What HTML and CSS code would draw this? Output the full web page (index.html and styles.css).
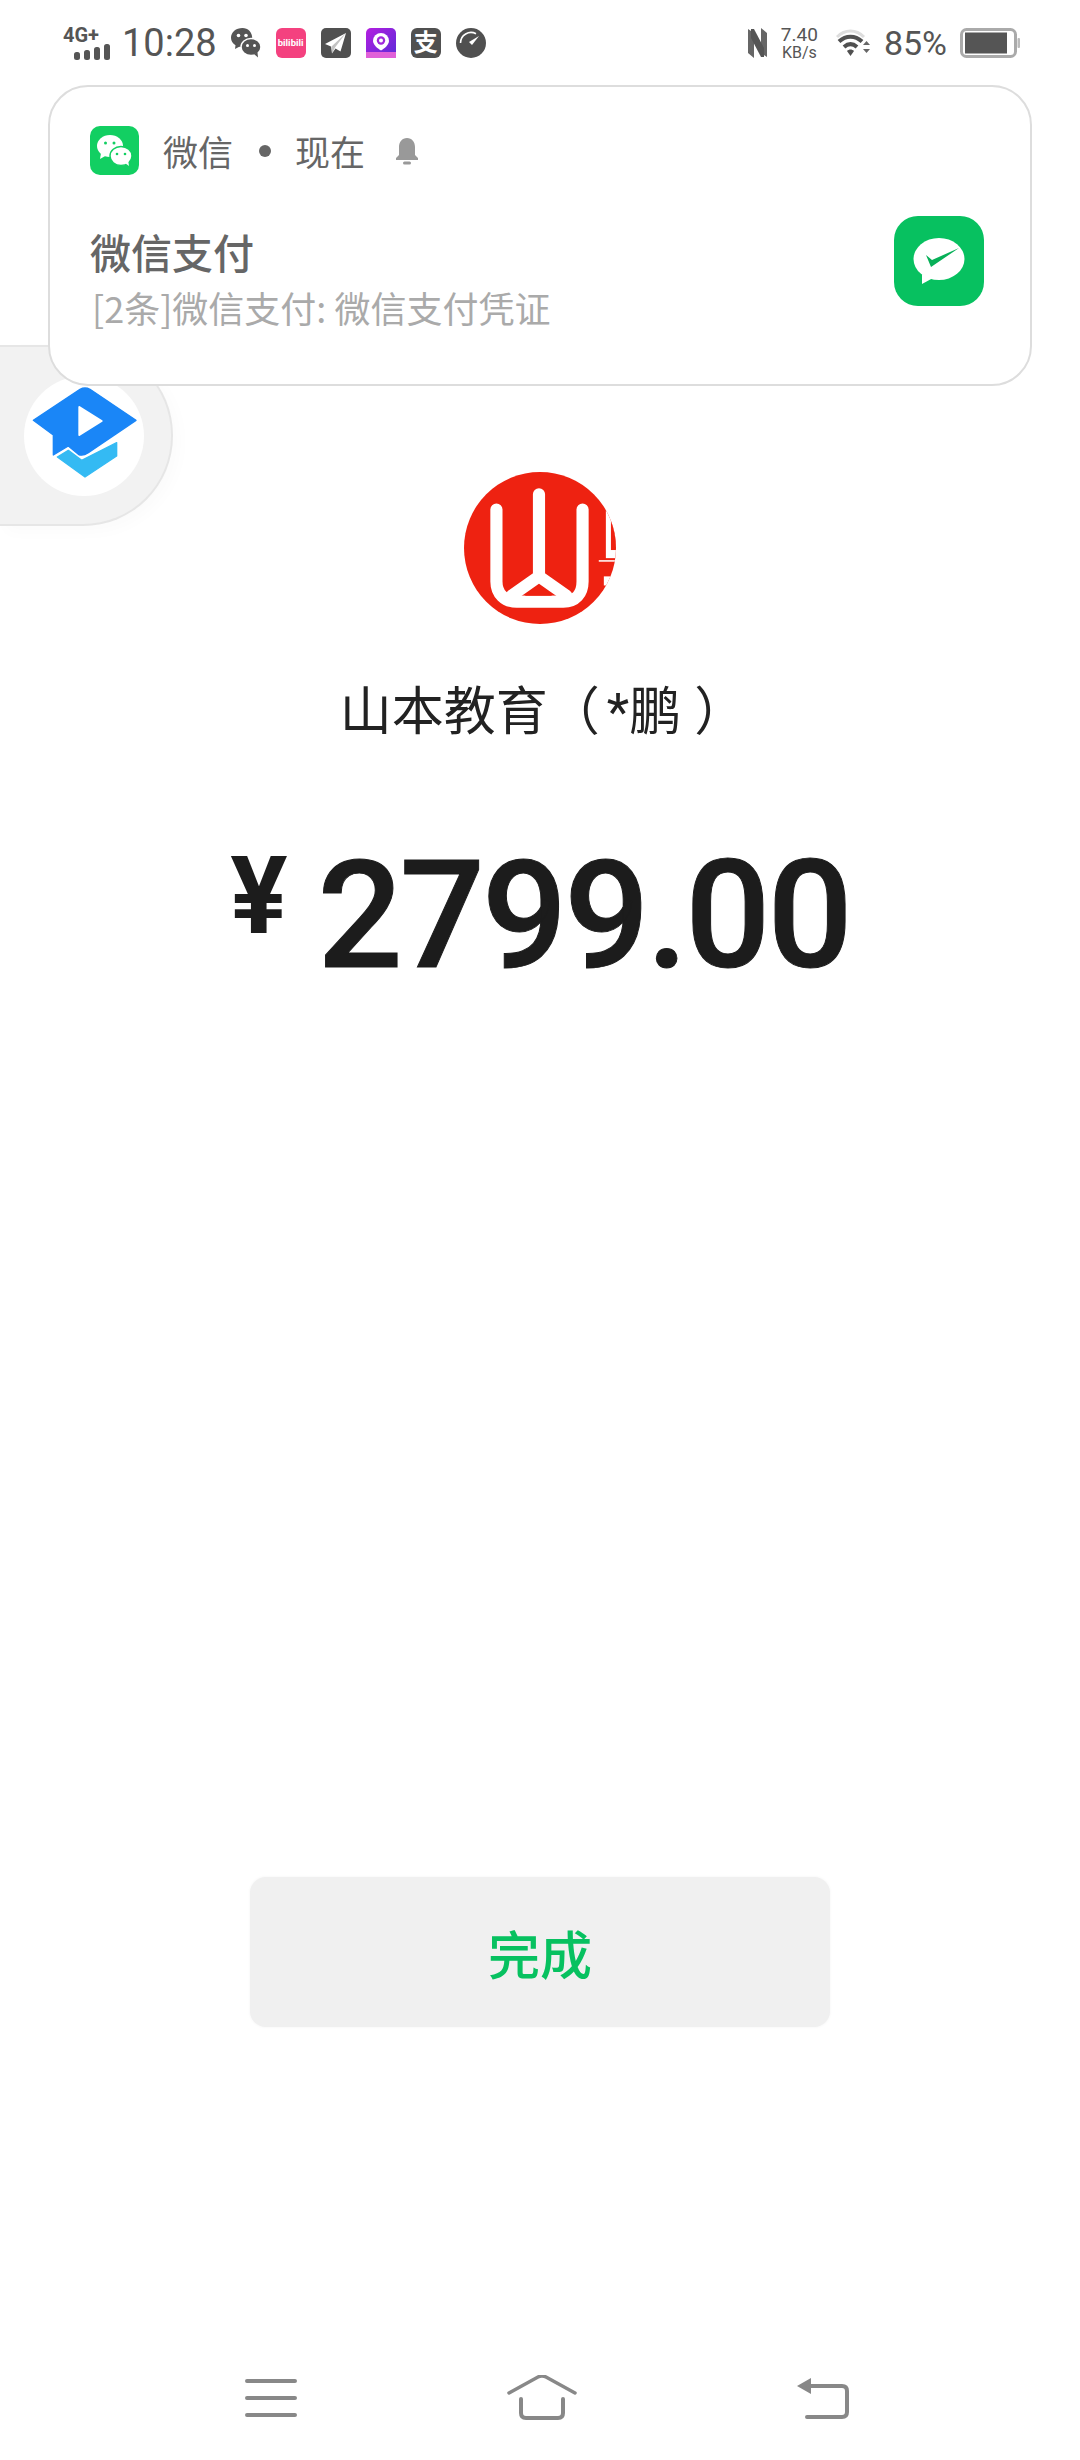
FILE: index.html
```html
<!DOCTYPE html>
<html lang="zh-CN">

<head>
  <meta charset="UTF-8">
  <meta name="viewport" content="width=device-width, initial-scale=1.0">
  <title>支付成功</title>
  <link rel="stylesheet" href="styles.css">
</head>

<body>
  <div class="page">
    <div class="status-bar">
      <div class="status-left">
        <div class="sig">
          <span class="sig-text">4G+</span>
          <svg width="36" height="16" viewBox="0 0 36 16">
            <rect x="0" y="8" width="6" height="8" rx="2.500" fill="#555" />
            <rect x="10" y="6" width="6" height="10" rx="2.500" fill="#555" />
            <rect x="20" y="3" width="6" height="13" rx="2.500" fill="#555" />
            <rect x="30" y="0" width="6" height="16" rx="2.500" fill="#555" />
          </svg>
        </div>
        <span class="time">10:28</span>
        <div class="app-icons">
          <svg width="30" height="30" viewBox="0 0 30 30">
            <path d="M11.500 0C5 0 0 4.200 0 9.800c0 3.200 1.700 5.800 4.500 7.500L4 21l4.200-2.300c1 .2 2 .3 3 .3 6 0 10-4 10-9.200C21.200 4.200 17 0 11.500 0z" fill="#555" />
            <ellipse cx="20" cy="19" rx="10" ry="8.500" fill="#555" stroke="#fff" stroke-width="1.500" />
            <path d="M23 26l4 3.500-.500-5z" fill="#555" />
            <circle cx="7.500" cy="7.500" r="1.800" fill="#fff" />
            <circle cx="15" cy="7.500" r="1.800" fill="#fff" />
            <circle cx="16.500" cy="17.500" r="1.500" fill="#fff" />
            <circle cx="23.500" cy="17.500" r="1.500" fill="#fff" />
          </svg>
          <div class="app-pink">bilibili</div>
          <svg width="30" height="30" viewBox="0 0 30 30">
            <rect width="30" height="30" rx="5" fill="#505050" />
            <path d="M25 5L4 16l6 2.500 1 7 3.500-5 5 3z" fill="#fff" />
            <path d="M25 5L10.500 18.500l.500 7 3-6z" fill="#505050" opacity=".35" />
          </svg>
          <svg width="30" height="30" viewBox="0 0 30 30">
            <defs>
              <linearGradient id="purple-fill" x1="0" y1="0" x2="1" y2="1">
                <stop offset="0" stop-color="#b41ee0" />
                <stop offset="1" stop-color="#5a2bd8" />
              </linearGradient>
            </defs>
            <rect width="30" height="30" rx="5" fill="url(#purple-fill)" />
            <rect y="24" width="30" height="6" fill="#e060d8" />
            <path d="M15 5a8 8 0 0 0-8 8c0 5 8 9.500 8 9.500s8-4.500 8-9.500a8 8 0 0 0-8-8z" fill="#fff" />
            <circle cx="15" cy="12.500" r="4.200" fill="#a028dc" />
            <circle cx="15" cy="12.500" r="2" fill="#fff" />
          </svg>
          <div class="app-zhi">支</div>
          <svg width="30" height="30" viewBox="0 0 30 30">
            <circle cx="15" cy="15" r="15" fill="#505050" />
            <path d="M4.500 15A10.500 10.500 0 0 1 20 5.800" fill="none" stroke="#fff" stroke-width="1.600" />
            <path d="M23 8L13 14l3 3z" fill="#fff" />
          </svg>
        </div>
      </div>
      <div class="status-right">
        <svg width="19" height="30" viewBox="0 0 19 30">
          <path d="M0 1l6 4v25l-6-5zM19 29l-6-4V0l6 5z" fill="#666" />
          <path d="M3 1h3l10 19v9h-3L3 10z" fill="#555" />
        </svg>
        <div class="speed">
          <span class="speed-val">7.40</span>
          <span class="speed-unit">KB/s</span>
        </div>
        <svg width="35" height="30" viewBox="0 0 35 30">
          <path d="M1 9C9 1 20 1 28 9" fill="none" stroke="#ddd" stroke-width="3" />
          <path d="M3 13.500c7-6.500 16-6.500 23 0" fill="none" stroke="#505050" stroke-width="4" />
          <path d="M8 19c4.500-4 8.500-4 13 0" fill="none" stroke="#505050" stroke-width="4" />
          <path d="M11 23c2-2 5-2 7 0l-3.500 5z" fill="#505050" />
          <path d="M27 17l3.500-4 3.500 4zM27 21l3.500 4 3.500-4z" fill="#666" />
        </svg>
        <span class="battery-pct">85%</span>
        <svg width="60" height="30" viewBox="0 0 60 30">
          <rect x="1.500" y="1.500" width="54" height="27" rx="5" fill="#fff" stroke="#aaa" stroke-width="3" />
          <rect x="5" y="4.500" width="42" height="21" fill="#555" />
          <rect x="57.500" y="10" width="2.500" height="10" rx="1" fill="#bbb" />
        </svg>
      </div>
    </div>

    <div class="main">
      <svg class="logo" width="152" height="152" viewBox="0 0 150 150">
        <defs>
          <clipPath id="logo-clip">
            <circle cx="75" cy="75" r="75" />
          </clipPath>
        </defs>
        <circle cx="75" cy="75" r="75" fill="#ee2211" />
        <path d="M32 37v71c0 12 8 20 20 20h46c12 0 19-8 19-20V37" fill="none" stroke="#fff" stroke-width="12" stroke-linecap="round" />
        <path d="M74 22v81M74 103L47 122M74 103l27 19" fill="none" stroke="#fff" stroke-width="12" stroke-linecap="round" />
        <path d="M47 122h54v8H47z" fill="#fff" />
        <path d="M73 112L60 122h27z" fill="#ee2211" />
        <g clip-path="url(#logo-clip)">
          <rect x="140" y="38" width="12" height="47" fill="#fff" />
          <rect x="145" y="48" width="7" height="29" fill="#ee2211" />
          <rect x="133" y="87" width="19" height="1.500" fill="#fff" />
          <rect x="138" y="103" width="14" height="9" fill="#fff" />
        </g>
      </svg>
      <h1 class="payee">山本教育（<span class="payee-name">*鹏</span> ）</h1>
      <div class="amount">
        <span class="currency">¥</span>
        <span class="value">2799.00</span>
      </div>
      <button class="done-btn">完成</button>
    </div>

    <div class="nav-bar">
      <svg width="52" height="40" viewBox="0 0 52 40">
        <path d="M2 3h48M2 20h48M2 37h48" fill="none" stroke="#888" stroke-width="4" stroke-linecap="round" />
      </svg>
      <svg class="nav-home" width="70" height="46" viewBox="0 0 70 46">
        <path d="M2 18L31 2q4-2 8 0l29 16" fill="none" stroke="#888" stroke-width="3.500" stroke-linecap="round" />
        <path d="M14 24v14q0 5 5 5h32q5 0 5-5V24" fill="none" stroke="#888" stroke-width="4" stroke-linecap="round" />
      </svg>
      <svg width="54" height="42" viewBox="0 0 54 42">
        <path d="M1 9L15 1v16z" fill="#888" />
        <path d="M12 9h34q5 0 5 5v21q0 5-5 5H11" fill="none" stroke="#888" stroke-width="4" stroke-linecap="round" />
      </svg>
    </div>

    <div class="float-ball">
      <div class="float-circle">
        <svg width="120" height="120" viewBox="72 135 360 360">
          <path d="M100 268L240 175q15-8 30 0l138 93-143 97q-18 12-30 5l-30-25-45 27v-60z" fill="#1a86f7" stroke="#1a86f7" stroke-width="4" stroke-linejoin="round" />
          <path d="M238 228l67 42-67 42z" fill="#fff" stroke="#fff" stroke-width="6" stroke-linejoin="round" />
          <path d="M172 378l33-20 40 30 105-53v40l-95 63z" fill="#34baf3" stroke="#34baf3" stroke-width="4" stroke-linejoin="round" />
        </svg>
      </div>
    </div>

    <div class="notice">
      <div class="notice-left">
        <div class="notice-head">
          <svg width="49" height="49" viewBox="0 0 49 49">
            <rect width="49" height="49" rx="10" fill="#12cf62" />
            <ellipse cx="20" cy="20" rx="13" ry="11" fill="#fff" />
            <path d="M11 27l-1 6 7-4z" fill="#fff" />
            <ellipse cx="31" cy="30" rx="11" ry="9.500" fill="#fff" stroke="#12cf62" stroke-width="1.500" />
            <path d="M35 37l4 3-1-6z" fill="#fff" />
            <circle cx="15.500" cy="17" r="1.500" fill="#12cf62" />
            <circle cx="24" cy="17" r="1.500" fill="#12cf62" />
            <circle cx="27" cy="28" r="1.300" fill="#12cf62" />
            <circle cx="35" cy="28" r="1.300" fill="#12cf62" />
          </svg>
          <span class="notice-app">微信</span>
          <span class="notice-dot"></span>
          <span class="notice-app">现在</span>
          <svg class="notice-bell" width="24" height="28" viewBox="0 0 24 28">
            <path d="M12 1c-5 0-8 4-8 9v8l-3 3v2h22v-2l-3-3v-8c0-5-3-9-8-9z" fill="#999" />
            <rect x="8" y="24.500" width="8" height="3" rx="1.500" fill="#999" />
          </svg>
        </div>
        <div class="notice-title">微信支付</div>
        <div class="notice-text">[2条]微信支付: 微信支付凭证</div>
      </div>
      <svg class="notice-pay" width="90" height="90" viewBox="0 0 90 90">
        <rect width="90" height="90" rx="24" fill="#07c160" />
        <ellipse cx="45" cy="43" rx="25.500" ry="21" fill="#fff" />
        <path d="M28 58l0 10 11-6z" fill="#fff" />
        <path d="M32 39l6 5 27-12-28 19z" fill="#07b058" />
      </svg>
    </div>
  </div>
</body>

</html>
```

FILE: styles.css
```css
* {
  box-sizing: border-box;
}

body {
  margin: 0;
  background-color: #ffffff;
  font-family: Roboto, "Noto Sans CJK SC", sans-serif;
}

.page {
  position: relative;
  display: flex;
  flex-direction: column;
  width: 1080px;
  height: 2460px;
  overflow: hidden;
  background-color: #ffffff;
}

/* status bar */
.status-bar {
  display: flex;
  justify-content: space-between;
  align-items: center;
  flex-shrink: 0;
  height: 85px;
  padding: 0 60px 0 63px;
  color: #555555;
}

.status-left,
.status-right {
  display: flex;
  align-items: center;
}

.sig {
  display: flex;
  flex-direction: column;
  align-items: flex-end;
  width: 47px;
}

.sig-text {
  align-self: flex-start;
  font-size: 20px;
  font-weight: 700;
  line-height: 18px;
}

.sig svg {
  display: block;
}

.time {
  margin: 0 14px 0 12px;
  font-size: 38px;
  line-height: 40px;
}

.app-icons {
  display: flex;
  gap: 15px;
}

.app-pink,
.app-zhi {
  display: flex;
  justify-content: center;
  align-items: center;
  width: 30px;
  height: 30px;
  color: #ffffff;
  font-weight: 700;
}

.app-pink {
  border-radius: 6px;
  background-color: #f4417f;
  font-size: 9.500px;
}

.app-zhi {
  border-radius: 6px;
  background-color: #505050;
  font-size: 24px;
  line-height: 30px;
}

.status-right svg {
  display: block;
}

.speed {
  display: flex;
  flex-direction: column;
  align-items: center;
  margin: 0 18px 0 14px;
}

.speed-val {
  font-size: 19px;
  line-height: 18px;
}

.speed-unit {
  margin-top: 1px;
  font-size: 16px;
  line-height: 15px;
}

.battery-pct {
  margin: 0 13px;
  font-size: 34px;
  line-height: 36px;
}

/* main content */
.main {
  display: flex;
  flex-direction: column;
  align-items: center;
  flex: 1;
  padding-top: 387px;
}

.logo {
  display: block;
}

.payee {
  margin: 59px 0 0;
  padding-left: 6px;
  color: #222222;
  font-size: 52px;
  font-weight: 400;
  line-height: 60px;
  white-space: pre;
}

.payee-name {
  margin-left: 7px;
}

.amount {
  display: flex;
  align-items: flex-start;
  margin-top: 88px;
  color: #1c1c1c;
  font-weight: 500;
}

.currency {
  margin-top: 6px;
  margin-right: 30px;
  font-size: 107px;
  font-weight: 700;
  line-height: 120px;
}

.value {
  font-size: 150px;
  letter-spacing: -3px;
  line-height: 170px;
  -webkit-text-stroke: 1px #1c1c1c;
}

.done-btn {
  width: 580px;
  height: 150px;
  margin-top: auto;
  margin-bottom: 328px;
  border: none;
  border-radius: 16px;
  background-color: #f0f0f0;
  box-shadow: 0 0 3px #f2f2f2;
  color: #07c160;
  font-family: Roboto, "Noto Sans CJK SC", sans-serif;
  font-size: 52px;
  font-weight: 500;
}

/* bottom nav */
.nav-bar {
  display: flex;
  justify-content: space-between;
  align-items: center;
  flex-shrink: 0;
  height: 85px;
  margin-bottom: 20px;
  padding: 0 230px 0 245px;
}

.nav-home {
  margin-right: 10px;
}

/* floating ball on the left edge */
.float-ball {
  position: absolute;
  top: 345px;
  left: 0;
  display: flex;
  justify-content: flex-end;
  align-items: center;
  width: 173px;
  height: 181px;
  padding-right: 27px;
  border: 2px solid #e6e6e6;
  border-left: none;
  border-radius: 0 90px 90px 0;
  background-color: #f2f2f2;
  box-shadow: 6px 6px 16px rgba(0, 0, 0, 0.02);
}

.float-circle {
  width: 120px;
  height: 120px;
  border-radius: 50%;
  background-color: #ffffff;
}

/* notification over the page */
.notice {
  position: absolute;
  top: 85px;
  left: 48px;
  display: flex;
  justify-content: space-between;
  width: 984px;
  height: 301px;
  padding: 39px 46px 0 40px;
  border: 2px solid #dddddd;
  border-radius: 40px;
  background-color: #ffffff;
}

.notice-head {
  display: flex;
  align-items: center;
  height: 49px;
}

.notice-head svg:first-child {
  margin-right: 24px;
}

.notice-app {
  color: #666666;
  font-size: 35px;
}

.notice-dot {
  width: 12px;
  height: 12px;
  margin: 0 24px 0 26px;
  border-radius: 50%;
  background-color: #666666;
}

.notice-bell {
  margin-left: 30px;
}

.notice-title {
  margin: 52px 0 0 0;
  color: #666666;
  font-size: 41px;
  font-weight: 500;
  line-height: 56px;
}

.notice-text {
  margin: 1px 0 0 2px;
  color: #aaaaaa;
  font-family: "Noto Sans CJK SC", sans-serif;
  font-size: 36px;
  line-height: 46px;
}

.notice-pay {
  margin-top: 90px;
}
```
